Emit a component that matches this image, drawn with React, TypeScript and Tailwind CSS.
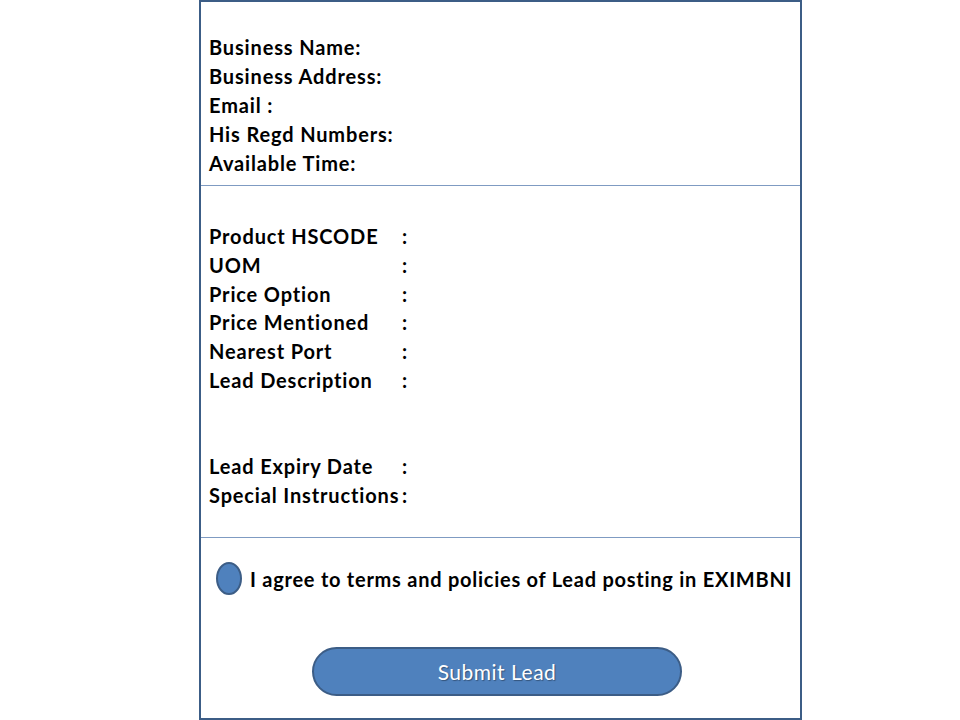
const business = ['Business Name:', 'Business Address:', 'Email :', 'His Regd Numbers:', 'Available Time:'];

const product: (string | null)[] = [
  'Product HSCODE',
  'UOM',
  'Price Option',
  'Price Mentioned',
  'Nearest Port',
  'Lead Description',
  null,
  null,
  'Lead Expiry Date',
  'Special Instructions',
];

export default function App() {
  return (
    <div className="h-[720px] w-[960px] bg-white font-['Lato',sans-serif] text-black">
      <div className="ml-[199px] flex h-[720px] w-[603px] flex-col border-2 border-[#3c5d86]">
        <section className="h-[183px] pl-[8px] pt-[31px] text-[20px] font-bold leading-[29px] tracking-[0.85px]">
          {business.map((b) => (
            <div key={b} className="whitespace-nowrap">{b}</div>
          ))}
        </section>
        <div className="h-px bg-[#7f9bc2]" />
        <section className="h-[351px] pl-[8px] pt-[36px] text-[20px] font-bold leading-[28.8px] tracking-[0.85px]">
          {product.map((p, i) => (
            <div key={i} className="flex h-[28.8px]">
              {p && (
                <>
                  <span className="w-[193px] whitespace-nowrap">{p}</span>
                  <span>:</span>
                </>
              )}
            </div>
          ))}
        </section>
        <div className="h-px bg-[#7f9bc2]" />
        <div className="flex items-center pl-[15px] pt-[24px]">
          <span className="h-[33px] w-[26px] shrink-0 rounded-[50%] border-2 border-[#3c5d86] bg-[#4f81bd]" />
          <span className="ml-[8px] whitespace-nowrap text-[20px] font-bold tracking-[0.75px]">
            I agree to terms and policies of Lead posting in EXIMBNI
          </span>
        </div>
        <div className="mt-[52px] flex pl-[111px]">
          <button className="flex h-[49px] w-[370px] items-center justify-center rounded-full border-2 border-[#3c5d86] bg-[#4f81bd] text-[21px] tracking-[0.5px] text-white [text-shadow:1px_1px_1px_rgba(0,0,0,0.35)]">
            Submit Lead
          </button>
        </div>
      </div>
    </div>
  );
}
